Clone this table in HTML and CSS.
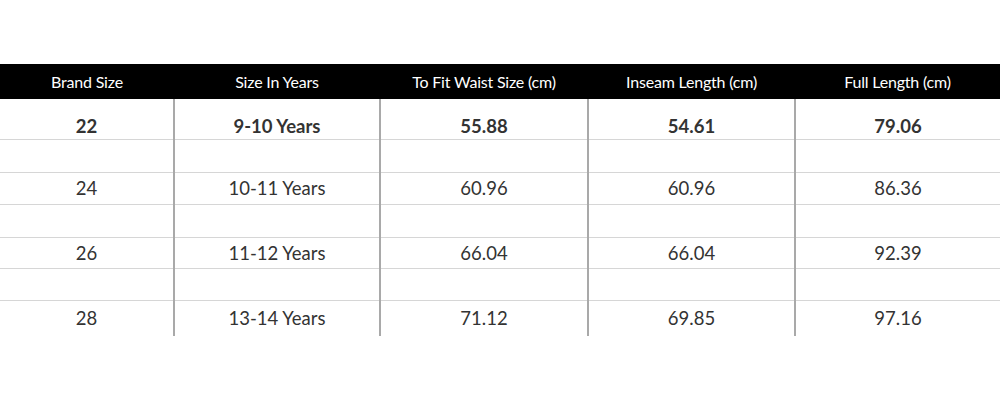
FILE: index.html
```html
<!DOCTYPE html>
<html>
<head>
<meta charset="utf-8">
<link rel="stylesheet" href="styles.css">
</head>
<body>
<table class="size-table">
  <colgroup>
    <col class="c1"><col class="c2"><col class="c3"><col class="c4"><col class="c5">
  </colgroup>
  <thead>
    <tr class="head">
      <th>Brand Size</th>
      <th>Size In Years</th>
      <th>To Fit Waist Size (cm)</th>
      <th>Inseam Length (cm)</th>
      <th>Full Length (cm)</th>
    </tr>
  </thead>
  <tbody>
    <tr class="row first">
      <td>22</td><td>9-10 Years</td><td>55.88</td><td>54.61</td><td>79.06</td>
    </tr>
    <tr class="spacer s1"><td></td><td></td><td></td><td></td><td></td></tr>
    <tr class="row r2"><td>24</td><td>10-11 Years</td><td>60.96</td><td>60.96</td><td>86.36</td></tr>
    <tr class="spacer s2"><td></td><td></td><td></td><td></td><td></td></tr>
    <tr class="row r3"><td>26</td><td>11-12 Years</td><td>66.04</td><td>66.04</td><td>92.39</td></tr>
    <tr class="spacer s3"><td></td><td></td><td></td><td></td><td></td></tr>
    <tr class="row r4 last"><td>28</td><td>13-14 Years</td><td>71.12</td><td>69.85</td><td>97.16</td></tr>
  </tbody>
</table>
</body>
</html>
```

FILE: styles.css
```css
html, body {
  margin: 0;
  padding: 0;
  background: #fff;
}
body {
  padding-top: 64px;
  font-family: Lato, "Liberation Sans", sans-serif;
}
.size-table {
  width: 1000px;
  border-collapse: collapse;
  table-layout: fixed;
  border-spacing: 0;
}
.c1 { width: 174px; }
.c2 { width: 206px; }
.c3 { width: 208px; }
.c4 { width: 207px; }
.c5 { width: 205px; }

.head th {
  background: #000;
  color: #fff;
  font-weight: 400;
  font-size: 16px;
  letter-spacing: -0.2px;
  height: 35px;
  padding: 1px 0 0 0;
  box-sizing: border-box;
  text-align: center;
  vertical-align: middle;
  line-height: 20px;
}
.size-table td {
  padding: 0;
  text-align: center;
  vertical-align: middle;
  color: #333;
  font-size: 18.5px;
  line-height: 20px;
  border-left: 2px solid #a9a9a9;
  border-top: 1px solid #d6d6d6;
}
.size-table td:first-child {
  border-left: none;
}
.first td {
  border-top: none;
  font-weight: 700;
  height: 40px;
  padding-top: 14px;
  box-sizing: border-box;
}
.s1 td { height: 32px; }
.r2 td { height: 31px; }
.s2 td { height: 32px; }
.r3 td { height: 30px; }
.s3 td { height: 31px; }
.r4 td { height: 35px; }
```
